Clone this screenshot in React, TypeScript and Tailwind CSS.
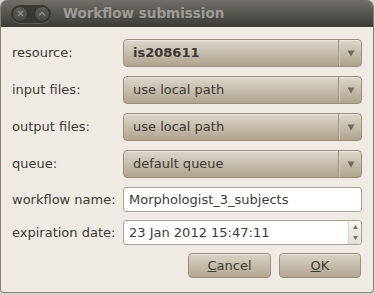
import React from 'react';

const font = { fontFamily: '"DejaVu Sans", "Liberation Sans", sans-serif' };

const Arrow = () => (
  <svg width="8" height="7" viewBox="0 0 8 7">
    <path d="M0.5 0.5 L7.5 0.5 L4 6.5 Z" fill="#6f685d" />
  </svg>
);

const Combo: React.FC<{ value: string; bold?: boolean }> = ({ value, bold }) => (
  <div className="flex h-[28px] w-[239px] items-stretch rounded-[4px] border border-[#9a8f7c] bg-gradient-to-b from-[#ddd6ca] to-[#afa38e] shadow-[inset_0_1px_0_rgba(255,255,255,0.45)]">
    <div className={`flex flex-1 items-center pl-[9px] text-[13px] text-[#3b3a36] ${bold ? 'font-bold' : ''}`}>
      {value}
    </div>
    <div className="w-px bg-[#9d927f]" />
    <div className="w-px bg-[#e0d9cd]/60" />
    <div className="flex w-[21px] items-center justify-center">
      <Arrow />
    </div>
  </div>
);

const Label: React.FC<{ children: React.ReactNode }> = ({ children }) => (
  <div className="w-[111px] text-[13px] text-[#3c3b37]">{children}</div>
);

export default function App() {
  return (
    <div className="h-[295px] w-[375px] bg-[#d8d5cf]" style={font}>
      <div className="flex h-[293px] w-[374px] flex-col overflow-hidden rounded-t-[7px] rounded-b-[4px] border-x border-b border-[#8a8272] bg-[#efebe4]">
        {/* title bar */}
        <div className="flex h-[27px] shrink-0 items-center bg-gradient-to-b from-[#73706a] to-[#3c3b37]">
          <div className="ml-[10px] flex h-[18px] w-[40px] items-center justify-between rounded-full bg-[#3a3935] px-[1px] shadow-[0_1px_0_rgba(255,255,255,0.12)]">
            <div className="flex h-[16px] w-[16px] items-center justify-center rounded-full border border-[#34332f] bg-gradient-to-b from-[#5f5d58] to-[#4a4945]">
              <svg width="7" height="7" viewBox="0 0 7 7">
                <path d="M1 1 L6 6 M6 1 L1 6" stroke="#8e8c86" strokeWidth="1.4" />
              </svg>
            </div>
            <div className="flex h-[16px] w-[16px] items-center justify-center rounded-full border border-[#34332f] bg-gradient-to-b from-[#5f5d58] to-[#4a4945]">
              <svg width="8" height="6" viewBox="0 0 8 6">
                <path d="M1 4.5 L4 1.5 L7 4.5" stroke="#8e8c86" strokeWidth="1.4" fill="none" />
              </svg>
            </div>
          </div>
          <div className="ml-[12px] text-[13.5px] font-bold text-[#9d9b95]">Workflow submission</div>
        </div>

        {/* body */}
        <div className="flex flex-col pl-[11px] pt-[12px]">
          <div className="flex items-center">
            <Label>resource:</Label>
            <Combo value="is208611" bold />
          </div>
          <div className="mt-[9px] flex items-center">
            <Label>input files:</Label>
            <Combo value="use local path" />
          </div>
          <div className="mt-[9px] flex items-center">
            <Label>output files:</Label>
            <Combo value="use local path" />
          </div>
          <div className="mt-[9px] flex items-center">
            <Label>queue:</Label>
            <Combo value="default queue" />
          </div>
          <div className="mt-[9px] flex items-center">
            <Label>workflow name:</Label>
            <div className="flex h-[25px] w-[239px] items-center rounded-[3px] border border-[#a7a196] bg-white pl-[5px] text-[13px] text-[#3c3b37]">
              Morphologist_3_subjects
            </div>
          </div>
          <div className="mt-[8px] flex items-center">
            <Label>expiration date:</Label>
            <div className="flex h-[25px] w-[239px] items-stretch rounded-[3px] border border-[#a7a196] bg-white text-[13px] text-[#3c3b37]">
              <div className="flex flex-1 items-center pl-[5px]">23 Jan 2012 15:47:11</div>
              <div className="flex w-[13px] flex-col items-center justify-between rounded-r-[3px] border-l border-[#d9d4cb] bg-gradient-to-b from-[#f6f4f0] to-[#e6e1d8] py-[4px]">
                <svg width="5" height="4" viewBox="0 0 5 4">
                  <path d="M0 4 L2.5 0 L5 4 Z" fill="#7a746a" />
                </svg>
                <svg width="5" height="4" viewBox="0 0 5 4">
                  <path d="M0 0 L2.5 4 L5 0 Z" fill="#7a746a" />
                </svg>
              </div>
            </div>
          </div>
          <div className="mt-[8px] flex justify-end gap-[8px] pr-[12px]">
            <button className="flex h-[25px] w-[83px] items-center justify-center rounded-[4px] border border-[#9a8f7c] bg-gradient-to-b from-[#d9d2c5] to-[#b2a691] text-[13px] text-[#3c3b37] shadow-[inset_0_1px_0_rgba(255,255,255,0.45)]">
              <span><span className="underline">C</span>ancel</span>
            </button>
            <button className="flex h-[25px] w-[82px] items-center justify-center rounded-[4px] border border-[#9a8f7c] bg-gradient-to-b from-[#d9d2c5] to-[#b2a691] text-[13px] text-[#3c3b37] shadow-[inset_0_1px_0_rgba(255,255,255,0.45)]">
              <span><span className="underline">O</span>K</span>
            </button>
          </div>
        </div>
      </div>
    </div>
  );
}
